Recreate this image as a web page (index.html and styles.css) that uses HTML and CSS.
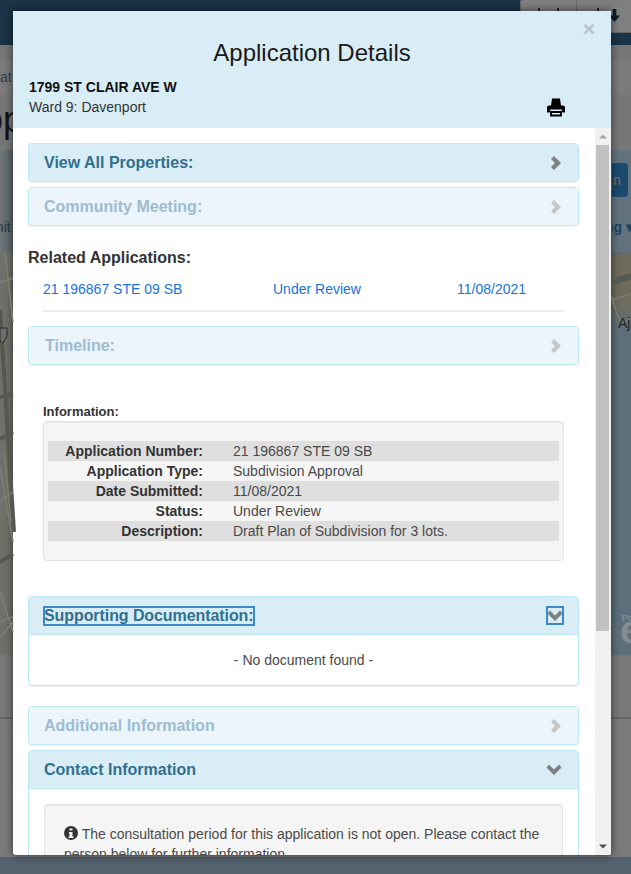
FILE: index.html
```html
<!DOCTYPE html>
<html lang="en">
<head>
<meta charset="utf-8">
<title>Application Details</title>
<link rel="stylesheet" href="styles.css">
</head>
<body>
<div class="page">
  <div class="topbar">
    <div class="top-buttons">
      <span class="top-btn"><i class="tip"></i><i class="tip"></i></span>
      <span class="top-btn top-btn-last"><i class="tip"></i><svg class="down-arrow" viewBox="0 0 12 14"><path d="M4 0h4v7h4l-6 7-6-7h4z"/></svg></span>
    </div>
  </div>
  <div class="crumbs"><span>at</span></div>
  <div class="page-title"><span class="page-title-text">op</span></div>
  <div class="toolbar">
    <div class="toolbar-left"><span class="toolbar-left-text">mit</span></div>
    <div class="toolbar-right"><span class="search-btn">n</span><span class="sort-label">ng ▾</span></div>
  </div>
  <div class="map">
    <svg class="map-svg" viewBox="0 0 631 403" preserveAspectRatio="none">
      <g fill="none" stroke="#55584f" stroke-width="4">
        <path d="M0 58L14 280"/><path d="M0 145L13 142"/><path d="M0 187L13 180"/><path d="M0 310L13 302"/>
        <path d="M612 30L631 24" stroke-width="6"/>
      </g>
      <g fill="none" stroke="#7c7f74" stroke-width="1.500">
        <path d="M0 30L13 26"/><path d="M5 0L13 70"/><path d="M0 250L13 240"/><path d="M0 340L13 380"/><path d="M0 370L13 365"/><path d="M0 215L13 290"/><path d="M4 200L11 270"/><path d="M0 385L13 370"/>
      </g>
      <path d="M612 45C618 70 622 75 631 65" fill="none" stroke="#7a7a76" stroke-width="1.500"/>
      <path d="M612 48L631 42" fill="none" stroke="#7a7a76" stroke-width="1.500"/>
      <path d="M0 76h7v8l-4 7-3-2z" fill="#6c706b" stroke="#2d2d2d" stroke-width="1"/>
    </svg>
    <span class="map-aj">Aj</span>
    <span class="map-pow">Po</span>
    <span class="map-e">e</span>
  </div>
  <div class="lower"></div>
  <div class="footer"></div>
</div>

<div class="modal" role="dialog" aria-labelledby="modal-title">
  <header class="modal-header">
    <span class="close">×</span>
    <h1 id="modal-title" class="modal-title">Application Details</h1>
    <div class="addr-row">
      <div class="addr">
        <strong>1799 ST CLAIR AVE W</strong>
        <span>Ward 9: Davenport</span>
      </div>
      <svg class="print" viewBox="0 0 18 18" aria-label="Print"><path d="M5 0h8l1 7h2a2 2 0 0 1 2 2v5h-3v4H3v-4H0V9a2 2 0 0 1 2-2h2zM3.200 11v1.400h11.600V11zM5 14.500v1.600h8v-1.600z" fill-rule="evenodd"/></svg>
    </div>
  </header>
  <div class="modal-main">
    <div class="content">
      <section class="panel"><div class="panel-head"><span class="panel-title">View All Properties:</span><svg class="chev" viewBox="0 0 12 14"><path d="M4 0l7 7-7 7-3-3 4-4-4-4z"/></svg></div></section>
      <section class="panel panel-off gap-s"><div class="panel-head"><span class="panel-title">Community Meeting:</span><svg class="chev" viewBox="0 0 12 14"><path d="M4 0l7 7-7 7-3-3 4-4-4-4z"/></svg></div></section>

      <h2 class="related-title">Related Applications:</h2>
      <div class="related-row">
        <a class="rel-num">21 196867 STE 09 SB</a>
        <a class="rel-status">Under Review</a>
        <a class="rel-date">11/08/2021</a>
      </div>

      <section class="panel panel-off timeline"><div class="panel-head"><span class="panel-title">Timeline:</span><svg class="chev" viewBox="0 0 12 14"><path d="M4 0l7 7-7 7-3-3 4-4-4-4z"/></svg></div></section>

      <h3 class="info-title">Information:</h3>
      <div class="well info-well">
        <dl class="info-list">
          <div class="info-row"><dt>Application Number:</dt><dd>21 196867 STE 09 SB</dd></div>
          <div class="info-row"><dt>Application Type:</dt><dd>Subdivision Approval</dd></div>
          <div class="info-row"><dt>Date Submitted:</dt><dd>11/08/2021</dd></div>
          <div class="info-row"><dt>Status:</dt><dd>Under Review</dd></div>
          <div class="info-row"><dt>Description:</dt><dd>Draft Plan of Subdivision for 3 lots.</dd></div>
        </dl>
      </div>

      <section class="panel supporting">
        <div class="panel-head panel-head-open"><span class="panel-title focus-ring">Supporting Documentation:</span><span class="chev-box"><svg class="chev chev-down" viewBox="0 0 16 12"><path d="M3 .5l5 5 5-5L15.500 3.500 8 11 .5 3.500z"/></svg></span></div>
        <div class="nodoc">- No document found -</div>
      </section>

      <section class="panel panel-off additional"><div class="panel-head"><span class="panel-title">Additional Information</span><svg class="chev" viewBox="0 0 12 14"><path d="M4 0l7 7-7 7-3-3 4-4-4-4z"/></svg></div></section>
      <section class="panel gap-s contact">
        <div class="panel-head panel-head-open"><span class="panel-title">Contact Information</span><svg class="chev chev-down" viewBox="0 0 16 12"><path d="M3 .5l5 5 5-5L15.500 3.500 8 11 .5 3.500z"/></svg></div>
        <div class="contact-body">
          <div class="well contact-well">
            <p><svg class="info-icon" viewBox="0 0 14 14"><circle cx="7" cy="7" r="7"/><path d="M5.500 2.500h3v2h-3zM5 6h3.500v4.500h1V12h-5v-1.500h1V7.500H5z" fill="#f5f5f5"/></svg> The consultation period for this application is not open. Please contact the person below for further information.</p>
          </div>
        </div>
      </section>
    </div>
    <div class="scrollbar">
      <svg class="sb-arrow" viewBox="0 0 16 16"><path d="M4 10l4-4 4 4z"/></svg>
      <div class="sb-track"><div class="sb-thumb"></div></div>
      <svg class="sb-arrow sb-arrow-down" viewBox="0 0 16 16"><path d="M4 6l4 4 4-4z"/></svg>
    </div>
  </div>
</div>
</body>
</html>
```
FILE: styles.css
```css
* { box-sizing: border-box; }
html, body { margin: 0; padding: 0; height: 100%; }
body { width: 631px; height: 874px; overflow: hidden; font-family: "Liberation Sans", Arial, sans-serif; font-size: 14px; color: #333; background: #7b7b7b; position: relative; }

/* dimmed page behind the dialog */
.page { display: flex; flex-direction: column; height: 874px; overflow: hidden; }
.topbar { height: 45px; flex: none; background: #1b3347; display: flex; justify-content: flex-end; align-items: flex-start; }
.top-buttons { display: flex; height: 33px; background: #7f7f7f; border-radius: 4px 0 0 0; width: 111px; border-bottom: 1px solid #666; }
.top-btn { width: 56px; border-left: 1px solid #666; flex: none; display: flex; align-items: flex-start; }
.top-btn-last { width: 55px; }
.tip { display: block; width: 2px; height: 3px; margin: 8px 0 0 17px; background: #1a2a36; }
.top-btn-last .tip { margin-left: 20px; }
.down-arrow { width: 11px; height: 13px; margin: 9px 11px 0 auto; fill: #111c26; }
.crumbs { height: 49px; flex: none; background: #7a7a7a; border-top: 14px solid #757575; font-size: 14px; color: #2b3f4e; display: flex; align-items: center; }
.page-title { height: 56px; flex: none; background: #777; font-size: 36px; color: #141414; line-height: 36px; padding-top: 8px; overflow: hidden; }
.page-title-text { display: block; margin-left: -17px; }
.toolbar { height: 102px; flex: none; display: flex; background: #5f6a71; justify-content: space-between; }
.toolbar-left { font-size: 14px; color: #26343e; padding-top: 69px; background: linear-gradient(90deg, #6f7679, #586268); width: 14px; white-space: nowrap; }
.toolbar-left-text { display: block; margin-left: -8px; }
.toolbar-right { width: 19px; background: #62737e; white-space: nowrap; overflow: hidden; }
.search-btn { display: block; width: 36px; height: 34px; margin: 13px 0 0 -20px; background: #1b4a70; color: #8e6656; border-radius: 4px; font-size: 14px; line-height: 34px; overflow: hidden; padding-left: 21px; }
.sort-label { display: block; margin: 21px 0 0 -7px; font-size: 14px; line-height: 18px; font-weight: bold; color: #17455f; }
.map { height: 403px; flex: none; position: relative; background: #6d7168; overflow: hidden; }
.map::after { content: ""; position: absolute; right: 0; top: 0; width: 20px; height: 100%; background: linear-gradient(180deg, #5f6a71 0, #5f6a71 2px, #6f6b5c 3px, #6f6b5c 12%, #5c6f7a 20%, #5c6f7a 100%); }
.map-svg { display: block; width: 631px; height: 403px; position: absolute; left: 0; top: 0; z-index: 1; }
.map-aj { position: absolute; left: 618px; top: 63px; font-size: 14px; color: #222; z-index: 2; }
.map-pow { position: absolute; left: 622px; top: 361px; font-size: 9px; line-height: 10px; color: #8f9aa0; z-index: 2; }
.map-e { position: absolute; left: 620px; top: 362px; font-size: 38px; font-weight: bold; color: #858c8f; line-height: 32px; z-index: 2; }
.lower { flex: 1; background: linear-gradient(180deg, #787878 0, #787878 62px, #646464 62px, #646464 64px, #7b7b7b 64px); }
.footer { height: 17px; flex: none; background: #52626e; }

/* dialog */
.modal { position: absolute; left: 13px; top: 11px; width: 598px; height: 844px; background: #fff; border-radius: 0 0 3px 3px; box-shadow: 0 0 8px rgba(0,0,0,.6); display: flex; flex-direction: column; overflow: hidden; }
.modal-header { height: 117px; flex: none; background: #d9edf7; position: relative; padding: 0 16px; }
.close { position: absolute; right: 16px; top: 6px; font-size: 21px; line-height: 24px; font-weight: bold; color: #b6c3ca; }
.modal-title { margin: 0; padding-top: 28px; text-align: center; font-size: 24px; line-height: 27px; font-weight: 400; color: #1a1a1a; }
.addr-row { display: flex; justify-content: space-between; align-items: flex-end; margin-top: 11px; }
.addr { display: flex; flex-direction: column; }
.addr strong { font-size: 14px; line-height: 20px; color: #111; }
.addr span { font-size: 14px; line-height: 20px; color: #333; }
.print { width: 18px; height: 19px; fill: #000; margin: 0 30px 0 0; }

.modal-main { flex: 1; display: flex; min-height: 0; }
.content { flex: 1; min-width: 0; overflow: hidden; padding: 15px 16px 0 15px; }

.panel { border: 1px solid #bce8f1; border-radius: 4px; background: #fff; box-shadow: 0 1px 1px rgba(0,0,0,.05); }
.panel-head { height: 37px; background: #d9edf7; border-radius: 3px; display: flex; align-items: center; justify-content: space-between; padding: 0 16px 0 15px; }
.panel-head-open { border-radius: 3px 3px 0 0; border-bottom: 1px solid #bce8f1; height: 38px; }
.panel-title { font-size: 16px; font-weight: bold; color: #31708f; line-height: 18px; }
.panel-off .panel-head { background: #ecf5fb; }
.panel-off .panel-title { color: #9dbccf; }
.panel-off .chev { fill: #c6c6c6; }
.chev { width: 12px; height: 14px; fill: #808080; flex: none; }
.chev-down { width: 16px; height: 12px; }
.gap-s { margin-top: 5px; }
.related-title { margin: 22px 0 0; font-size: 16px; line-height: 20px; font-weight: bold; color: #333; }
.related-row { display: flex; margin: 11px 14px 0; padding: 0 1px; height: 33px; border-bottom: 2px solid #eee; line-height: 20px; color: #1673dd; }
.rel-num { width: 230px; }
.rel-status { width: 184px; }
.timeline { margin-top: 14px; }
.timeline .panel-title { margin-left: 1px; }
.info-title { margin: 39px 0 0 15px; font-size: 13px; line-height: 16px; font-weight: bold; color: #333; }
.well { background: #f5f5f5; border: 1px solid #e3e3e3; border-radius: 4px; box-shadow: inset 0 1px 1px rgba(0,0,0,.05); }
.info-well { margin: 1px 15px 0; height: 140px; padding: 19px 4px 0; }
.info-list { margin: 0; }
.info-row { display: flex; height: 20px; line-height: 20px; }
.info-row:nth-child(odd) { background: #dfdfdf; }
.info-row dt { width: 155px; text-align: right; font-weight: bold; color: #333; }
.info-row dd { margin: 0 0 0 30px; color: #4a4a4a; }
.supporting { margin-top: 35px; height: 90px; }
.nodoc { text-align: center; line-height: 20px; padding-top: 15px; color: #4a4a4a; }
.focus-ring { outline: 2px solid #3d88c9; outline-offset: -1px; letter-spacing: -.08px; }
.chev-box { display: flex; align-items: center; justify-content: center; width: 16px; height: 17px; outline: 2px solid #3d88c9; outline-offset: -1px; margin-right: -1px; }
.additional { margin-top: 20px; }
.contact-body { padding: 15px 15px 0; }
.contact-well { height: 80px; padding: 19px 19px 0; }
.contact-well p { margin: 0; line-height: 20px; color: #4a4a4a; }
.info-icon { width: 14px; height: 14px; fill: #333; vertical-align: -1px; }

.scrollbar { width: 16px; flex: none; background: #f1f1f1; display: flex; flex-direction: column; }
.sb-arrow { width: 16px; height: 17px; flex: none; fill: #a3a3a3; display: block; }
.sb-arrow-down { fill: #505050; }
.sb-track { flex: 1; padding: 0 2px 0 1px; }
.sb-thumb { height: 486px; background: #c1c1c1; }
```
